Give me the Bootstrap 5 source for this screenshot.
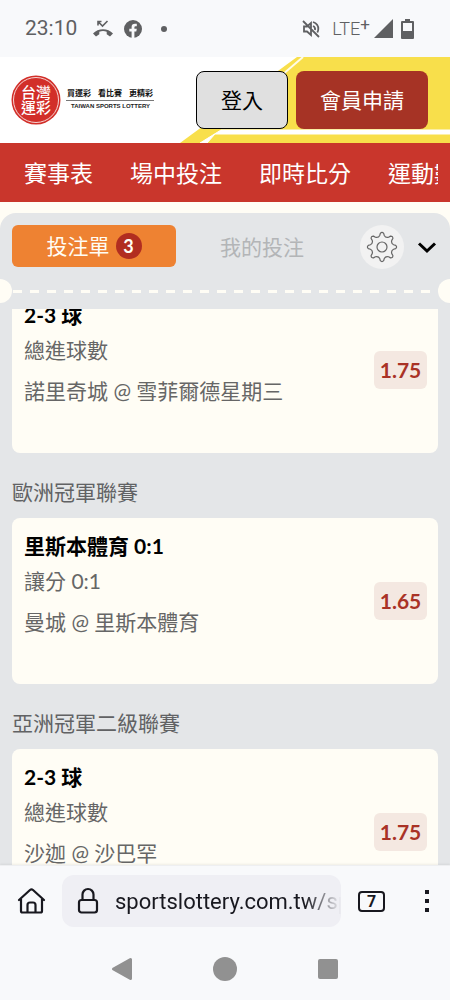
<!DOCTYPE html>
<html lang="zh-Hant">
<head>
<meta charset="utf-8">
<meta name="viewport" content="width=device-width, initial-scale=1">
<title>台灣運彩</title>
<link href="https://cdn.jsdelivr.net/npm/bootstrap@5.3.0/dist/css/bootstrap.min.css" rel="stylesheet">
<style>
:root{--cream:#fffdf5;--chrome:#f8f9fb;--panel:#e4e6e8;--red:#c9362c;--deep:#a63325}
body{font-family:Lato,"Noto Sans CJK TC",sans-serif;font-size:21px;background:var(--cream);color:#000}
svg{display:block;flex:none}
.status-bar{background:var(--chrome);height:57px;color:#5f6062;padding:0 36px 0 25px;font-family:Roboto,sans-serif}
.clock{font-weight:400;width:67px}
.lte{font-weight:300;font-size:18px;line-height:1}
.lte sup{font-size:17px;top:-5px;font-weight:400}
.site-head{background:#fff;height:86px;padding:0 22px 0 10px}
.stripes{position:absolute;right:0;top:0}
.site-head .btn{font-size:21px;height:58px;border-radius:8px;padding:0 24px;position:relative}
.site-head .btn-login{background:#e0e0e0;border:1px solid #000;color:#000}
.site-head .btn-join{background:var(--deep);border:0;color:#fff}
.main-nav{background:var(--red);padding:0 12px}
.main-nav ul{gap:37px;padding:2px 12px 0;height:59px;font-size:23px}
.main-nav a{color:#fff}
.bet-panel{background:var(--panel);border-radius:16px 16px 0 0;margin-top:11px;min-height:0}
.panel-tabs{padding:12px 12px 0;height:66px}
.tab-slip{background:#ee8232;color:var(--cream);border-radius:6px;width:164px;height:42px;font-size:21px;padding:0;gap:6px}
.tab-mine{color:#b3b5b7;font-size:21px;padding:6px 0 0;border:0}
.count{background:#b12d20;width:26px;height:26px;font-size:18px;line-height:26px;font-weight:700}
.gear{background:#f2f2f2;width:44px;height:44px;padding:0;border:0}
.tear{height:24px;padding:0 13px;margin-bottom:6px;overflow:hidden}
.tear::before,.tear::after{content:"";position:absolute;width:24px;height:24px;border-radius:50%;background:var(--cream);top:0}
.tear::before{left:-12px}.tear::after{right:-12px}
.dashes{height:3px;background:repeating-linear-gradient(90deg,var(--cream) 0 9px,transparent 9px 17px)}
.slips{padding:0 12px;overflow:hidden;min-height:0}
.slips section:first-child{margin-top:-22px}
.league{font-size:21px;line-height:32px;margin:0;padding:23px 0 10px;font-weight:400;color:#616264}
.slip{background:var(--cream);border-radius:8px;height:166px;padding:10px 11px 0 12px}
.pick{font-size:21px;line-height:36px;font-weight:700;margin:0}
.info{line-height:34px;color:#666;margin:0}
.teams{line-height:36px;color:#666;margin:6px 0 0}
.odds{background:#f4e8e1;color:#a93226;font-weight:700;border-radius:6px;width:53px;height:38px;line-height:38px;text-align:center;margin-top:54px}
.browser{background:var(--chrome);border-top:1px solid #eeeff1;box-shadow:0 -1px 2px #0001;z-index:1}
.address{padding:9px 21px 0 16px}
.url-box{background:#efeff4;border-radius:12px;height:52px;padding-left:15px;margin:0 17px 0 15px;min-width:0}
.url-box input{font:22px Roboto,sans-serif;color:#18181f;background:none;border:0;outline:0;padding:0;width:0;margin-left:16px;-webkit-mask-image:linear-gradient(90deg,#000 84%,transparent);mask-image:linear-gradient(90deg,#000 84%,transparent)}
.plain{background:none;border:0;padding:0}
.tabs-count{border:2px solid #18181f;border-radius:4px;width:27px;height:21px;font:700 16px/17px Roboto,sans-serif;color:#18181f;margin-right:40px}
.system-nav{height:73px;padding:11px 111px 0}
</style>
</head>
<body>
<div class="vh-100 d-flex flex-column overflow-hidden">
  <div class="status-bar d-flex align-items-center flex-shrink-0">
    <span class="clock">23:10</span>
    <svg width="22" height="18" viewBox="0 0 22 18" fill="#5f6062"><path d="M1 13.5C6 7.7 16 7.7 21 13.5L18 16.5L14.7 14.2V11.7Q11 10.4 7.3 11.7V14.2L4 16.5Z"/><path d="M9.500 1.500H6V5.500M6.500 2L10.500 6L15.500 1" fill="none" stroke="#5f6062" stroke-width="1.6"/></svg>
    <svg class="ms-2" width="22" height="18" viewBox="0 0 18 18"><circle cx="9" cy="9" r="9" fill="#5f6062"/><path d="M7.6 18V11.5H5.3V8.8H7.6V7Q7.6 3.7 11 3.7H12.8V6.2H11.5Q10.4 6.2 10.4 7.3V8.8H12.8L12.3 11.5H10.4V18Z" fill="#f8f9fb"/></svg>
    <svg class="ms-3" width="8" height="8"><circle cx="4" cy="4" r="3" fill="#5f6062"/></svg>
    <svg class="ms-auto" width="18" height="18" viewBox="0 0 18 18" fill="none" stroke="#5f6062" stroke-width="1.8"><path d="M1 1L17 17M2 6.5H5L9 3V15L5 11.5H2ZM11 2Q16.5 4 16.3 9Q16.2 11 15.3 12.5M11 6Q13.5 7 13 10"/></svg>
    <span class="lte ms-2 ps-1">LTE<sup>+</sup></span>
    <svg class="ms-1" width="19" height="19"><path d="M0 19L19 0V19Z" fill="#5f6062"/></svg>
    <svg class="ms-2" width="13" height="20" viewBox="0 0 13 20"><path d="M4 0H9V2H12Q13 2 13 3V19Q13 20 12 20H1Q0 20 0 19V3Q0 2 1 2H4Z" fill="#5f6062"/><path d="M2 4H11V12H2Z" fill="#f8f9fb"/></svg>
  </div>

  <header class="site-head position-relative d-flex align-items-center flex-shrink-0">
    <svg class="stripes" width="270" height="86" viewBox="0 0 270 86"><path d="M0 86L117 0H270V86Z" fill="#f8df4b"/><path d="M270 73H41L20 86H27L35 77H270Z" fill="#fff" stroke="#fff"/><path d="M123 0L60 54" stroke="#fffce8" stroke-width="2"/></svg>
    <a href="#" class="position-relative" aria-label="台灣運彩">
      <svg width="146" height="52" viewBox="0 0 146 52" font-family="'Noto Sans CJK TC',sans-serif">
        <circle cx="26" cy="26" r="24.5" fill="#d22f29"/><circle cx="26" cy="26" r="22.5" fill="none" stroke="#fff" stroke-width=".8"/>
        <g fill="#fff" font-size="15" font-weight="500" text-anchor="middle"><text x="26" y="24">台灣</text><text x="26" y="39">運彩</text></g>
        <g fill="#111" font-size="8" font-weight="700"><text x="57" y="22">買運彩</text><text x="88" y="22">看比賽</text><text x="119" y="22">更精彩</text></g>
        <path d="M56 26.5H144" stroke="#555" stroke-width=".8"/>
        <text x="61" y="34" font-family="'Liberation Sans',sans-serif" font-size="6" font-weight="700" fill="#222">TAIWAN SPORTS LOTTERY</text>
      </svg>
    </a>
    <button class="btn btn-login ms-auto">登入</button>
    <button class="btn btn-join ms-2">會員申請</button>
  </header>

  <nav class="main-nav flex-shrink-0">
    <div class="overflow-hidden">
      <ul class="list-unstyled d-flex align-items-center text-nowrap mb-0">
        <li><a href="#" class="text-decoration-none">賽事表</a></li>
        <li><a href="#" class="text-decoration-none">場中投注</a></li>
        <li><a href="#" class="text-decoration-none">即時比分</a></li>
        <li><a href="#" class="text-decoration-none">運動數據</a></li>
      </ul>
    </div>
  </nav>

  <main class="bet-panel flex-grow-1 d-flex flex-column">
    <div class="panel-tabs d-flex align-items-start flex-shrink-0">
      <button class="btn tab-slip d-flex align-items-center justify-content-center">投注單<span class="count rounded-circle">3</span></button>
      <div class="flex-grow-1 d-flex justify-content-center pe-2 me-1">
        <button class="btn tab-mine">我的投注</button>
      </div>
      <button class="btn gear rounded-circle d-flex align-items-center justify-content-center" aria-label="設定">
        <svg width="32" height="32" viewBox="-16 -16 32 32" fill="none" stroke="#666" stroke-width="1.2" stroke-linejoin="round"><circle r="5"/><path id="cog"/></svg>
      </button>
      <button class="plain ms-2 ps-1 mt-3" aria-label="收合"><svg width="22" height="14" viewBox="0 0 22 14"><path d="M3 2.5L11 10L19 2.5" fill="none" stroke="#000" stroke-width="3"/></svg></button>
    </div>
    <div class="tear position-relative d-flex align-items-center flex-shrink-0"><div class="dashes w-100"></div></div>

    <div class="slips flex-grow-1">
      <section>
        <div class="slip d-flex justify-content-between">
          <div><p class="pick">2-3 球</p><p class="info">總進球數</p><p class="teams">諾里奇城 @ 雪菲爾德星期三</p></div>
          <div class="odds">1.75</div>
        </div>
      </section>
      <section>
        <h2 class="league">歐洲冠軍聯賽</h2>
        <div class="slip d-flex justify-content-between">
          <div><p class="pick">里斯本體育 0:1</p><p class="info">讓分 0:1</p><p class="teams">曼城 @ 里斯本體育</p></div>
          <div class="odds">1.65</div>
        </div>
      </section>
      <section>
        <h2 class="league">亞洲冠軍二級聯賽</h2>
        <div class="slip d-flex justify-content-between">
          <div><p class="pick">2-3 球</p><p class="info">總進球數</p><p class="teams">沙迦 @ 沙巴罕</p></div>
          <div class="odds">1.75</div>
        </div>
      </section>
    </div>
  </main>

  <footer class="browser flex-shrink-0">
    <div class="address d-flex align-items-center">
      <button class="plain" aria-label="首頁"><svg width="31" height="28" viewBox="0 0 31 28" fill="none" stroke="#18181f" stroke-width="2.2" stroke-linecap="round" stroke-linejoin="round"><path d="M3 13L14 3Q15.500 1.800 17 3L28 13M5 12V24Q5 25.500 6.500 25.500H24.500Q26 25.500 26 24V12M11.500 25V18Q11.500 15.500 14 15.500H17Q19.500 15.500 19.500 18V25"/></svg></button>
      <div class="url-box flex-grow-1 d-flex align-items-center">
        <svg width="22" height="28" viewBox="0 0 22 28" fill="none" stroke="#18181f" stroke-width="2.200"><rect x="2" y="13" width="18" height="12.500" rx="2.500"/><path d="M5.500 13V7.500A5.500 5.500 0 0 1 16.500 7.500V13"/></svg>
        <input class="flex-grow-1" type="text" aria-label="網址" value="sportslottery.com.tw/sportsbook" readonly>
      </div>
      <button class="tabs-count bg-transparent p-0" aria-label="分頁">7</button>
      <button class="plain" aria-label="選單"><svg width="4" height="22" fill="#18181f"><path d="M0 0H4V4H0ZM0 9H4V13H0ZM0 18H4V22H0Z"/></svg></button>
    </div>
    <div class="system-nav d-flex justify-content-between">
      <button class="plain" aria-label="返回"><svg width="22" height="24" viewBox="0 0 22 24"><path d="M2.500 12L19.500 2.500V21.500Z" fill="#919191" stroke="#919191" stroke-width="3" stroke-linejoin="round"/></svg></button>
      <button class="plain" aria-label="主畫面"><svg width="24" height="24"><circle cx="12" cy="12" r="12" fill="#919191"/></svg></button>
      <button class="plain" aria-label="最近"><svg width="22" height="24"><rect x="1" y="2" width="20" height="20" rx="2" fill="#919191"/></svg></button>
    </div>
  </footer>
</div>
<script src="https://cdn.jsdelivr.net/npm/bootstrap@5.3.0/dist/js/bootstrap.bundle.min.js"></script>
<script>
// Eight rounded teeth joined by scooped valleys
let d = '';
for (let i = 0; i < 8; i++) {
  const p = (r, deg) => { const a = (i * 45 - 90 + deg) * Math.PI / 180; return (r * Math.cos(a)).toFixed(2) + ' ' + (r * Math.sin(a)).toFixed(2); };
  d += (i ? 'L' : 'M') + p(13.8, -7) + 'Q' + p(15.5, 0) + ' ' + p(13.8, 7) + 'L' + p(11.8, 11) + 'Q' + p(9.6, 22.5) + ' ' + p(11.8, 34);
}
document.getElementById('cog').setAttribute('d', d + 'Z');
</script>
</body>
</html>
